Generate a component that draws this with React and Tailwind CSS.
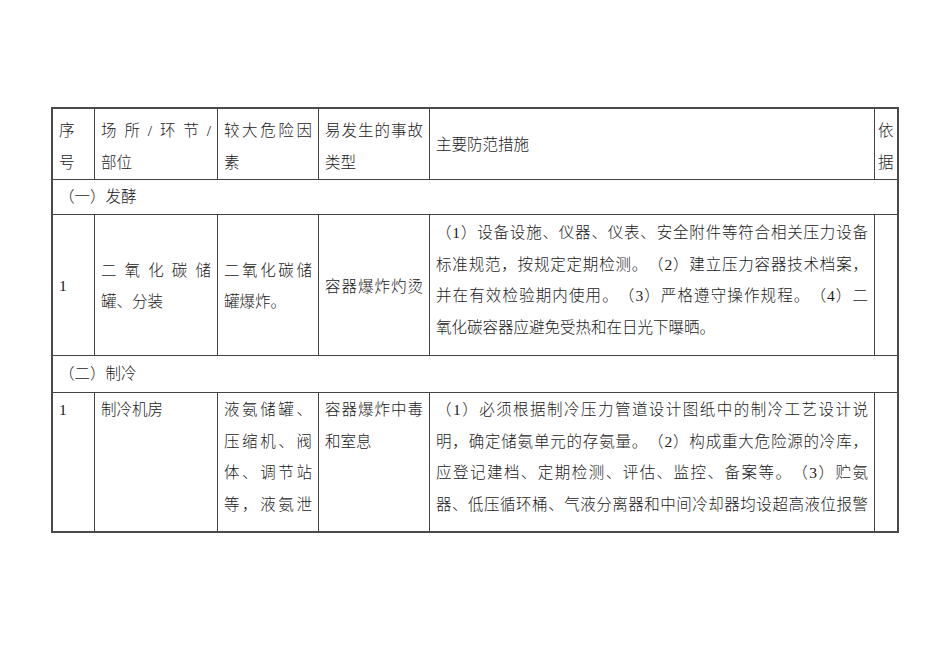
import React from "react";

// column widths include the 1px right rule of each cell
const cols = "grid grid-cols-[42px_123px_101px_111px_445px_22px]";
const cell = "border-r border-[#444] px-[6px]";

const Line = ({ children, j }) => (
  <div className={j ? "text-justify [text-align-last:justify] whitespace-nowrap" : "whitespace-nowrap"}>
    {children}
  </div>
);

const Lines = ({ items }) =>
  items.map((l, i) => (
    <Line key={i} j={l.j}>
      {l.t}
    </Line>
  ));

const SectionRow = ({ label, h }) => (
  <div className={`flex items-center border-b border-[#444] px-[6px] ${h}`}>{label}</div>
);

export default function App() {
  return (
    <div className="min-h-screen bg-white pt-[107px] pl-[51px] font-['Liberation_Serif','Noto_Sans_CJK_SC',serif] text-[15.5px] text-[#1a1a1a] font-light [text-spacing-trim:space-all]">
      <div className="w-[848px] border-2 border-[#4a4a4a] leading-[31.5px]">
        {/* header */}
        <div className={`${cols} h-[71px] border-b border-[#444]`}>
          <div className={`${cell} pt-[6px]`}>
            <Lines items={[{ t: "序" }, { t: "号" }]} />
          </div>
          <div className={`${cell} pt-[6px]`}>
            <Lines items={[{ t: "场所/环节/", j: true }, { t: "部位" }]} />
          </div>
          <div className={`${cell} pt-[6px]`}>
            <Lines items={[{ t: "较大危险因", j: true }, { t: "素" }]} />
          </div>
          <div className={`${cell} pt-[6px]`}>
            <Lines items={[{ t: "易发生的事故", j: true }, { t: "类型" }]} />
          </div>
          <div className={`${cell} flex items-center pt-[2px]`}>主要防范措施</div>
          <div className="px-[3px] pt-[6px]">
            <Lines items={[{ t: "依" }, { t: "据" }]} />
          </div>
        </div>

        <SectionRow label="（一）发酵" h="h-[35px]" />

        {/* 发酵 rows */}
        <div className={`${cols} h-[141px] border-b border-[#444]`}>
          <div className={`${cell} flex items-center pt-[2px]`}>1</div>
          <div className={`${cell} flex flex-col justify-center pt-[2px]`}>
            <Lines items={[{ t: "二氧化碳储", j: true }, { t: "罐、分装" }]} />
          </div>
          <div className={`${cell} flex flex-col justify-center pt-[2px]`}>
            <Lines items={[{ t: "二氧化碳储", j: true }, { t: "罐爆炸。" }]} />
          </div>
          <div className={`${cell} flex flex-col justify-center pt-[4px]`}>
            <Lines items={[{ t: "容器爆炸灼烫", j: true }]} />
          </div>
          <div className={`${cell} pt-[2px]`}>
            <Lines
              items={[
                { t: "（1）设备设施、仪器、仪表、安全附件等符合相关压力设备", j: true },
                { t: "标准规范，按规定定期检测。（2）建立压力容器技术档案，", j: true },
                { t: "并在有效检验期内使用。（3）严格遵守操作规程。（4）二", j: true },
                { t: "氧化碳容器应避免受热和在日光下曝晒。" },
              ]}
            />
          </div>
          <div />
        </div>

        <SectionRow label="（二）制冷" h="h-[37px]" />

        {/* 制冷 rows, cut off at page edge */}
        <div className={`${cols} h-[138px] overflow-hidden`}>
          <div className={`${cell} pt-[1px]`}>1</div>
          <div className={`${cell} pt-[1px]`}>制冷机房</div>
          <div className={`${cell} pt-[1px]`}>
            <Lines
              items={[
                { t: "液氨储罐、", j: true },
                { t: "压缩机、阀", j: true },
                { t: "体、调节站", j: true },
                { t: "等，液氨泄", j: true },
              ]}
            />
          </div>
          <div className={`${cell} pt-[1px]`}>
            <Lines items={[{ t: "容器爆炸中毒", j: true }, { t: "和室息" }]} />
          </div>
          <div className={`${cell} pt-[1px]`}>
            <Lines
              items={[
                { t: "（1）必须根据制冷压力管道设计图纸中的制冷工艺设计说", j: true },
                { t: "明，确定储氨单元的存氨量。（2）构成重大危险源的冷库，", j: true },
                { t: "应登记建档、定期检测、评估、监控、备案等。（3）贮氨", j: true },
                { t: "器、低压循环桶、气液分离器和中间冷却器均设超高液位报警", j: true },
              ]}
            />
          </div>
          <div />
        </div>
      </div>
    </div>
  );
}
